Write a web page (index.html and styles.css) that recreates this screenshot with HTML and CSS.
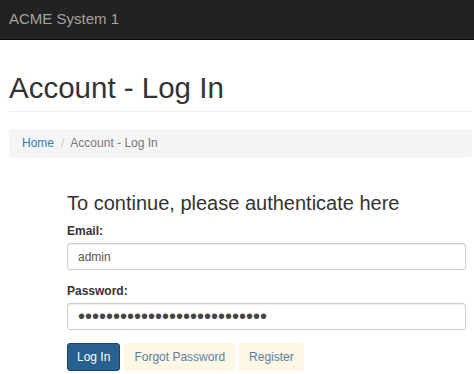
FILE: index.html
```html
<!DOCTYPE html>
<html lang="en">
<head>
    <meta charset="UTF-8">
    <meta name="viewport" content="width=device-width, initial-scale=1.0">
    <title>Account - Log In</title>
    <link rel="stylesheet" href="styles.css">
</head>
<body>
    <div class="navbar">
        <a class="brand" href="#">ACME System 1</a>
    </div>

    <div class="container">
        <div class="page-header">
            <h1>Account - Log In</h1>
        </div>

        <ol class="breadcrumb">
            <li><a href="#">Home</a></li>
            <li class="active">Account - Log In</li>
        </ol>

        <form class="login-form">
            <h3>To continue, please authenticate here</h3>
            <div class="form-group">
                <label for="email">Email:</label>
                <input type="text" id="email" class="form-control" value="admin">
            </div>
            <div class="form-group">
                <label for="password">Password:</label>
                <input type="password" id="password" class="form-control password" value="aaaaaaaaaaaaaaaaaaaaaaaaaaa">
            </div>
            <div class="actions">
                <button type="button" class="btn btn-primary">Log In</button>
                <a href="#" class="btn btn-link">Forgot Password</a>
                <a href="#" class="btn btn-link">Register</a>
            </div>
        </form>
    </div>
</body>
</html>
```

FILE: styles.css
```css
body {
    margin: 0;
    font-family: 'Liberation Sans', Arial, Helvetica, sans-serif;
    font-size: 12px;
    line-height: 17px;
    color: #333;
    background-color: #fff;
}
a {
    color: #337ab7;
    text-decoration: none;
}
.navbar {
    height: 39px;
    background-color: #222;
    border-bottom: 1px solid #080808;
    display: flex;
    align-items: center;
}
.brand {
    color: #a3a3a3;
    font-size: 15px;
    padding-left: 9px;
    margin-top: -2px;
}
.container {
    padding: 0 2px 0 9px;
}
.page-header {
    margin-top: 32px;
    padding-bottom: 7px;
    border-bottom: 1px solid #eee;
}
.page-header h1 {
    margin: 0;
    font-size: 29.5px;
    font-weight: normal;
    line-height: 1.1;
}
.breadcrumb {
    list-style: none;
    margin: 17px 0 0;
    padding: 6px 13px;
    background-color: #f5f5f5;
    border-radius: 3px;
    display: flex;
}
.breadcrumb li + li::before {
    content: "/";
    color: #ccc;
    padding: 0 6px 0 7px;
}
.breadcrumb .active {
    color: #777;
}
.login-form {
    margin: 34px 6px 0 58px;
}
.login-form h3 {
    margin: 0 0 9px;
    font-size: 20px;
    font-weight: normal;
    line-height: 1.1;
}
.form-group {
    margin-bottom: 13px;
}
.form-group label {
    display: block;
    font-weight: bold;
    margin-bottom: 3px;
}
.form-control {
    display: block;
    box-sizing: border-box;
    width: 100%;
    height: 27px;
    padding: 4px 10px;
    font-family: inherit;
    font-size: 12px;
    color: #555;
    border: 1px solid #ccc;
    border-radius: 3px;
    box-shadow: inset 0 1px 1px rgba(0,0,0,0.075);
}
.form-control.password {
    font-size: 20px;
    padding: 0 10px;
    color: #444;
}
.actions {
    display: flex;
    gap: 4px;
}
.btn {
    box-sizing: border-box;
    height: 28px;
    padding: 0 9px;
    font-family: inherit;
    font-size: 12px;
    line-height: 26px;
    border: 1px solid transparent;
    border-radius: 3px;
    display: inline-block;
}
.btn-primary {
    color: #fff;
    background-color: #286090;
    border-color: #1c4468;
}
.btn-link {
    color: #5a80a6;
    background-color: #fdf7e5;
}
```
